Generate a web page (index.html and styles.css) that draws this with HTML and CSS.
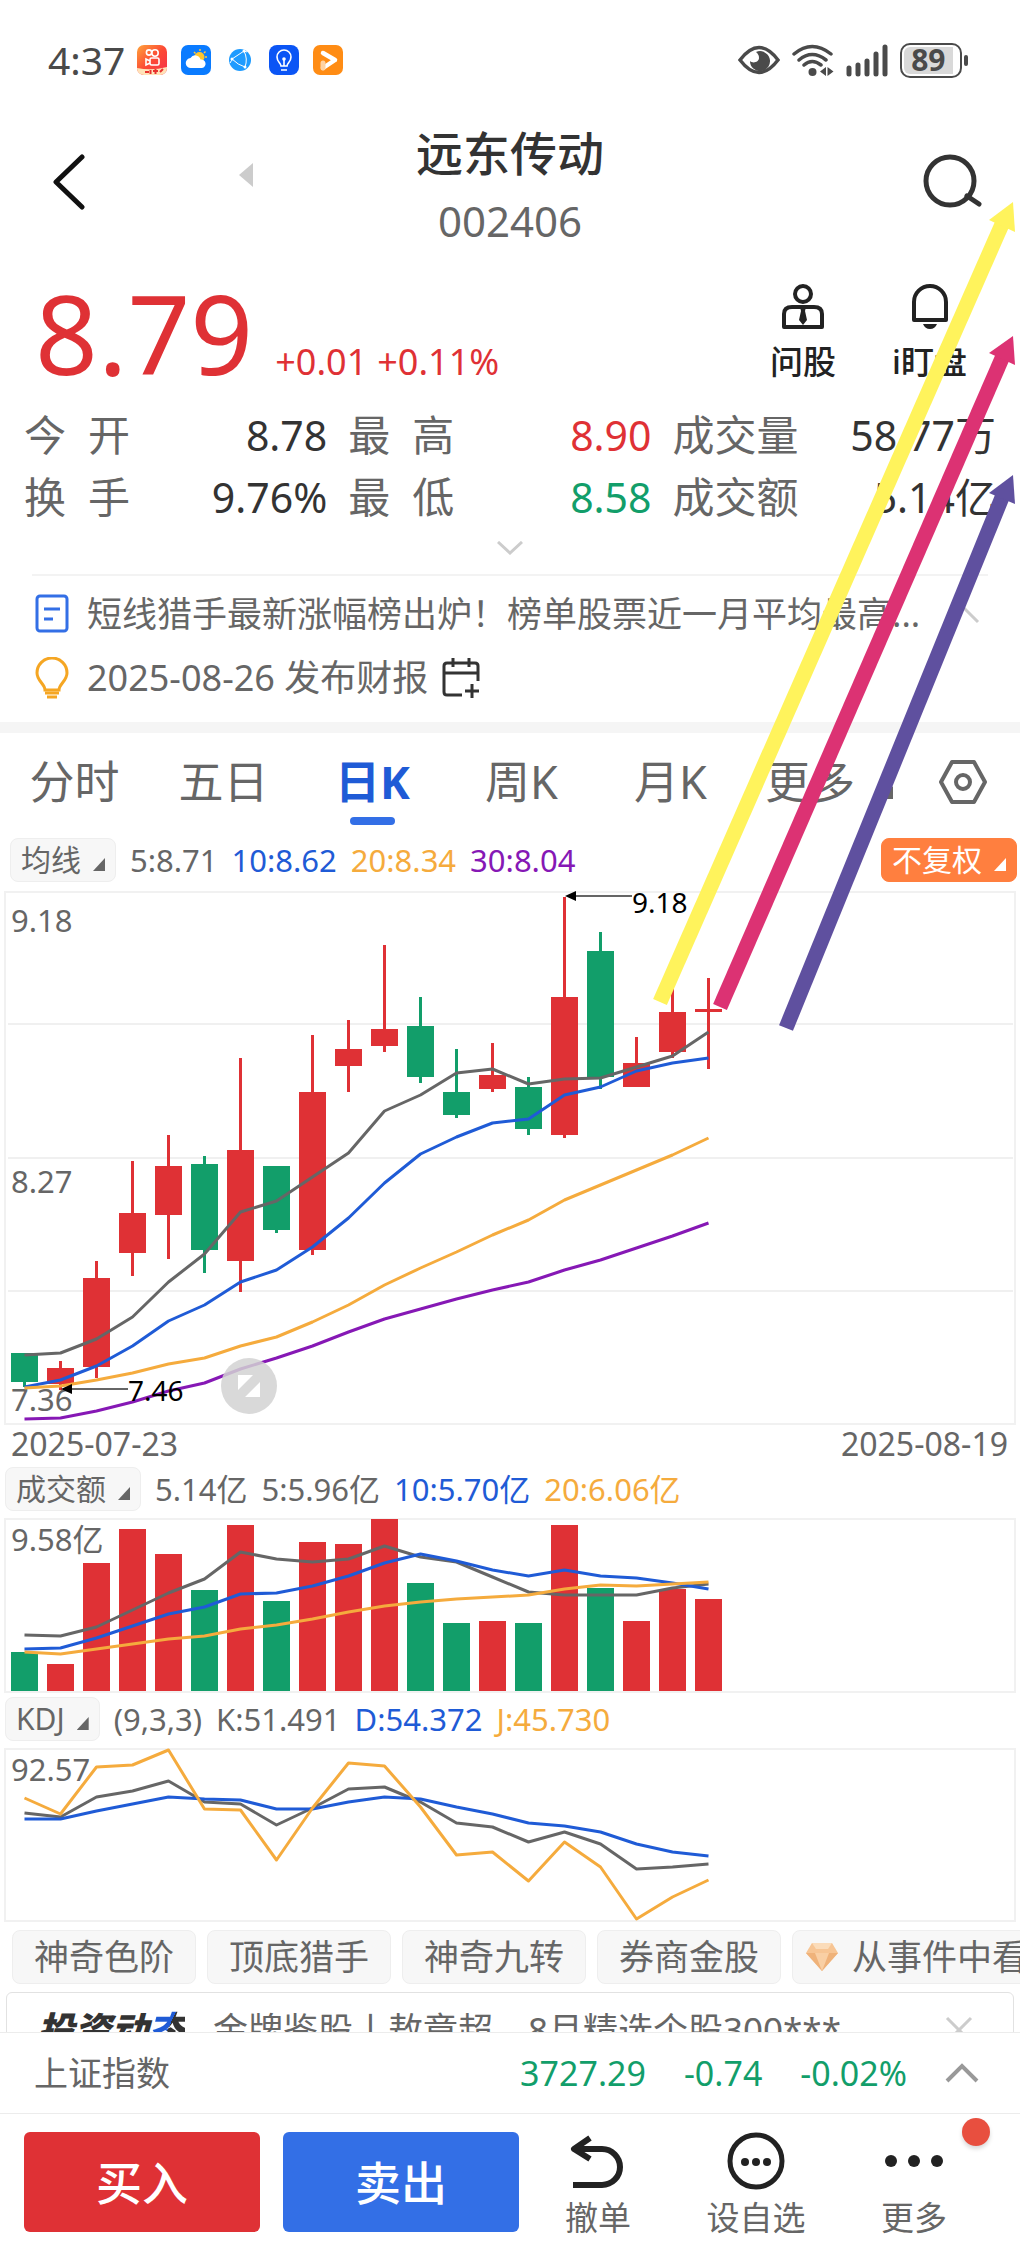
FILE: index.html
```html
<!DOCTYPE html>
<html lang="zh-CN">
<head>
    <meta charset="UTF-8">
    <meta name="viewport" content="width=device-width, initial-scale=1.0">
    <title>远东传动 002406</title>
    <link rel="stylesheet" href="styles.css">
</head>
<body>

<div class="page">
    <main class="content">
        <div class="status-bar">
            <span class="clock">4:37</span>
            <div class="status-apps">
                <svg width="30" height="30" viewBox="0 0 30 30">
                    <defs>
                        <linearGradient id="kuai" x1="0" y1="0" x2="1" y2="1">
                            <stop offset="0" stop-color="#ffa43a"/>
                            <stop offset="0.5" stop-color="#fc4a35"/>
                            <stop offset="1" stop-color="#f5304a"/>
                        </linearGradient>
                    </defs>
                    <rect width="30" height="30" rx="7" fill="url(#kuai)"/>
                    <g fill="none" stroke="#fff" stroke-width="1.6">
                        <circle cx="12" cy="7.500" r="2.600"/>
                        <circle cx="18" cy="8" r="3.200"/>
                        <rect x="13" y="13" width="9" height="7" rx="1.500"/>
                        <path d="M13 16l-4-2v6l4-2"/>
                    </g>
                    <path d="M0 23q15 3 30-1v1a7 7 0 0 1-7 7H7a7 7 0 0 1-7-7z" fill="#ffe3b8"/>
                    <path d="M8 27h4M13.500 25v4M16 26h5M18.500 24v5M23 27l3-3" stroke="#e8322e" stroke-width="2"/>
                </svg>
                <svg width="30" height="30" viewBox="0 0 30 30">
                    <rect width="30" height="30" rx="7" fill="#0a7bff"/>
                    <path d="M19 4v2M24.500 6.500l-1.500 1.500M26 12h-2M13 7l1.500 1.500" stroke="#ffc93a" stroke-width="1.500"/>
                    <circle cx="18.500" cy="12" r="5" fill="#ffc62e"/>
                    <path d="M10 23a5 5 0 0 1-.5-10 5.500 5.500 0 0 1 10 1.500A4.300 4.300 0 0 1 21 23z" fill="#fff"/>
                </svg>
                <svg width="30" height="30" viewBox="0 0 30 30">
                    <circle cx="15" cy="15" r="11" fill="#1e9bff"/>
                    <path d="M7 14L19 6M7 14q6 6 13 8M19 6q4 8 1 16M5 18q2-3 2-4M19 6l3 1" fill="none" stroke="#fff" stroke-width="1"/>
                    <circle cx="7" cy="14" r="1.500" fill="#fff"/>
                    <circle cx="19" cy="6" r="1.500" fill="#fff"/>
                    <circle cx="20" cy="22" r="1.500" fill="#fff"/>
                </svg>
                <svg width="30" height="30" viewBox="0 0 30 30">
                    <rect width="30" height="30" rx="8" fill="#0b55f5"/>
                    <path d="M12 21c0-3-4-4-4-9a7 7 0 0 1 14 0c0 5-4 6-4 9zM12 25h6M15 21v-7" fill="none" stroke="#fff" stroke-width="1.600"/>
                    <circle cx="15" cy="14" r="1.800" fill="#fff"/>
                </svg>
                <svg width="30" height="30" viewBox="0 0 30 30">
                    <rect width="30" height="30" rx="7" fill="#ff8c14"/>
                    <path d="M10 8l12 7-12 8" fill="none" stroke="#fff" stroke-width="4.500" stroke-linecap="round" stroke-linejoin="round"/>
                    <path d="M10 23v-5" stroke="#ffd3a3" stroke-width="5" stroke-linecap="round"/>
                </svg>
            </div>
            <div class="status-right">
                <svg width="42" height="32" viewBox="0 0 42 32">
                    <path d="M2 16Q21-9 40 16Q21 41 2 16z" fill="none" stroke="#4a4a4a" stroke-width="3.500"/>
                    <path d="M18 8a10 10 0 1 1-6 9c3 3 9 1 9-3 0-3-1-4-3-6z" fill="#4a4a4a"/>
                </svg>
                <svg width="42" height="34" viewBox="0 0 42 34">
                    <path d="M2 11q18-15 37 0M7 17q13-11 27 0M12 22q8-7 17 0" fill="none" stroke="#4a4a4a" stroke-width="3.500" stroke-linecap="round"/>
                    <circle cx="20.500" cy="29" r="4" fill="#4a4a4a"/>
                    <path d="M34 24v9l-6-4.500zM35.500 24v9l6-4.500z" fill="#4a4a4a"/>
                </svg>
                <svg width="42" height="34" viewBox="0 0 42 34">
                    <path d="M3 25v6M12 22v9M21 18v13M30 11v20M39 4v27" stroke="#4a4a4a" stroke-width="5" stroke-linecap="round"/>
                </svg>
                <span class="battery"><span class="battery-level">89</span></span>
            </div>
        </div>

        <header class="header">
            <div class="header-left">
                <button class="icon-button" aria-label="返回">
                    <svg width="34" height="56" viewBox="0 0 34 56"><path d="M31 3L5 28l26 25" fill="none" stroke="#111" stroke-width="5" stroke-linecap="round" stroke-linejoin="round"/></svg>
                </button>
                <button class="icon-button prev-stock" aria-label="上一只">
                    <svg width="14" height="24" viewBox="0 0 14 24"><path d="M14 0v24L0 12z" fill="#ccc"/></svg>
                </button>
            </div>
            <div class="stock-title">
                <h1>远东传动</h1>
                <p>002406</p>
            </div>
            <button class="icon-button search" aria-label="搜索">
                <svg width="60" height="56" viewBox="0 0 60 56"><circle cx="28" cy="27" r="24" fill="none" stroke="#333" stroke-width="5"/><path d="M45 42l12 8" stroke="#333" stroke-width="5" stroke-linecap="round"/></svg>
            </button>
        </header>

        <section class="quote">
            <div class="quote-price">
                <strong>8.79</strong>
                <span>+0.01</span>
                <span>+0.11%</span>
            </div>
            <div class="quote-actions">
                <button class="quote-action">
                    <svg width="44" height="46" viewBox="0 0 44 46">
                        <g fill="none" stroke="#222" stroke-width="4">
                            <circle cx="22" cy="10" r="8"/>
                            <path d="M3 43V30q0-7 8-7h22q8 0 8 7v13z" stroke-linejoin="round"/>
                        </g>
                        <path d="M19 23h6l-1 4 2 9-4 5-4-5 2-9z" fill="#222"/>
                    </svg>
                    问股
                </button>
                <button class="quote-action">
                    <svg width="44" height="46" viewBox="0 0 44 46">
                        <path d="M6 36V18a16 16 0 0 1 32 0v18z" fill="none" stroke="#222" stroke-width="4" stroke-linejoin="round"/>
                        <path d="M15 40h14q-2 5-7 5t-7-5z" fill="#222"/>
                    </svg>
                    i盯盘
                </button>
            </div>
        </section>

        <dl class="stats">
            <div><dt>今开</dt><dd>8.78</dd></div>
            <div><dt>最高</dt><dd class="up">8.90</dd></div>
            <div><dt>成交量</dt><dd>58.77万</dd></div>
            <div><dt>换手</dt><dd>9.76%</dd></div>
            <div><dt>最低</dt><dd class="down">8.58</dd></div>
            <div><dt>成交额</dt><dd>5.14亿</dd></div>
        </dl>
        <button class="icon-button expand" aria-label="展开">
            <svg width="26" height="14" viewBox="0 0 26 14"><path d="M1 1l12 11L25 1" fill="none" stroke="#ccc" stroke-width="3"/></svg>
        </button>

        <section class="news">
            <a class="news-row" href="#">
                <svg width="34" height="40" viewBox="0 0 34 40">
                    <rect x="2" y="2" width="30" height="35" rx="3" fill="none" stroke="#336fe6" stroke-width="3"/>
                    <path d="M9 15h16M9 25h9" stroke="#336fe6" stroke-width="3"/>
                </svg>
                <span>短线猎手最新涨幅榜出炉！榜单股票近一月平均最高...</span>
                <svg class="news-caret" width="34" height="20" viewBox="0 0 34 20"><path d="M2 18L17 3l15 15" fill="none" stroke="#ccc" stroke-width="3"/></svg>
            </a>
            <a class="news-row report" href="#">
                <svg width="34" height="42" viewBox="0 0 34 42">
                    <path d="M10 33c0-6-8-9-8-17a15 15 0 0 1 30 0c0 8-8 11-8 17z" fill="none" stroke="#f5a623" stroke-width="3"/>
                    <path d="M10 36h14M12 40h10" stroke="#f5a623" stroke-width="3"/>
                </svg>
                <span>2025-08-26 发布财报</span>
                <svg class="calendar" width="38" height="40" viewBox="0 0 38 40">
                    <path d="M20 37H5q-3 0-3-3V8q0-3 3-3h28q3 0 3 3v15M2 15h34M11 0v9M27 0v9M30 26v14M23 33h14" fill="none" stroke="#333" stroke-width="3"/>
                </svg>
            </a>
        </section>

        <nav class="tabs">
            <a href="#">分时</a>
            <a href="#">五日</a>
            <a href="#" class="active">日K</a>
            <a href="#">周K</a>
            <a href="#">月K</a>
            <a href="#" class="more">更多<i class="corner"></i></a>
            <button class="icon-button" aria-label="设置">
                <svg width="50" height="46" viewBox="0 0 50 46">
                    <path d="M14 3h22l11 20-11 20H14L3 23z" fill="none" stroke="#666" stroke-width="4" stroke-linejoin="round"/>
                    <circle cx="25" cy="23" r="7" fill="none" stroke="#666" stroke-width="4"/>
                </svg>
            </button>
        </nav>

        <div class="legend legend-main">
            <button class="picker">均线<i class="corner"></i></button>
            <span>5:8.71</span>
            <span class="blue">10:8.62</span>
            <span class="amber">20:8.34</span>
            <span class="purple">30:8.04</span>
            <button class="picker picker-orange">不复权<i class="corner"></i></button>
        </div>
        <svg class="chart" id="kline" viewBox="0 0 1020 534"></svg>
        <div class="dates"><span>2025-07-23</span><span>2025-08-19</span></div>

        <div class="legend">
            <button class="picker">成交额<i class="corner"></i></button>
            <span>5.14亿</span>
            <span>5:5.96亿</span>
            <span class="blue">10:5.70亿</span>
            <span class="amber">20:6.06亿</span>
        </div>
        <svg class="chart" id="volume" viewBox="0 0 1020 175"></svg>

        <div class="legend">
            <button class="picker">KDJ<i class="corner"></i></button>
            <span>(9,3,3)</span>
            <span>K:51.491</span>
            <span class="blue">D:54.372</span>
            <span class="amber">J:45.730</span>
        </div>
        <svg class="chart" id="kdj" viewBox="0 0 1020 174"></svg>

        <div class="chips">
            <button class="chip">神奇色阶</button>
            <button class="chip">顶底猎手</button>
            <button class="chip">神奇九转</button>
            <button class="chip">券商金股</button>
            <button class="chip chip-gem">
                <svg width="32" height="28" viewBox="0 0 32 28">
                    <path d="M6 0h20l6 10-16 18L0 10z" fill="#f7c594"/>
                    <path d="M0 10h32L16 28z" fill="#efb27a"/>
                    <path d="M9 10h14l-7 18z" fill="#f9cfa4"/>
                    <path d="M6 0h20l-4 6H10z" fill="#fbdcba"/>
                </svg>
                从事件中看
            </button>
        </div>

        <a class="banner" href="#">
            <strong>投资动<em>态</em></strong>
            <span>金牌鉴股丨敖章超，8月精选个股300***</span>
            <svg width="28" height="28" viewBox="0 0 28 28"><path d="M2 2l24 24M26 2L2 26" stroke="#ccc" stroke-width="3"/></svg>
        </a>
    </main>

    <footer>
        <a class="index-bar" href="#">
            <span class="index-name">上证指数</span>
            <span>3727.29</span>
            <span>-0.74</span>
            <span>-0.02%</span>
            <svg width="34" height="20" viewBox="0 0 34 20"><path d="M2 18L17 3l15 15" fill="none" stroke="#999" stroke-width="4"/></svg>
        </a>
        <div class="trade-bar">
            <button class="trade buy">买入</button>
            <button class="trade sell">卖出</button>
            <div class="trade-tools">
                <button class="tool">
                    <svg width="60" height="58" viewBox="0 0 60 58">
                        <path d="M22 6L6 17l16 10M6 17h28a18 18 0 0 1 0 36H5" fill="none" stroke="#222" stroke-width="6" stroke-linejoin="round"/>
                    </svg>
                    撤单
                </button>
                <button class="tool">
                    <svg width="60" height="58" viewBox="0 0 60 58">
                        <circle cx="30" cy="29" r="26" fill="none" stroke="#222" stroke-width="5"/>
                        <g fill="#222"><circle cx="19" cy="30" r="4"/><circle cx="30" cy="30" r="4"/><circle cx="41" cy="30" r="4"/></g>
                    </svg>
                    设自选
                </button>
                <button class="tool">
                    <svg width="60" height="58" viewBox="0 0 60 58">
                        <g fill="#222"><circle cx="7" cy="29" r="6"/><circle cx="30" cy="29" r="6"/><circle cx="53" cy="29" r="6"/></g>
                    </svg>
                    更多
                    <i class="badge"></i>
                </button>
            </div>
        </div>
    </footer>

    <!-- trend arrows drawn over the page -->
    <svg class="trend-arrows" viewBox="0 0 1020 1040">
        <g stroke="#fff35c" fill="#fff35c">
            <path d="M660 1002L1003 222" stroke-width="15"/>
            <path d="M1013 202L989 220L1015 232z" stroke="none"/>
        </g>
        <g stroke="#dc3273" fill="#dc3273">
            <path d="M720 1007L1003 356" stroke-width="15"/>
            <path d="M1013 336L989 353L1015 365z" stroke="none"/>
        </g>
        <g stroke="#5f509f" fill="#5f509f">
            <path d="M786 1028L1003 495" stroke-width="15"/>
            <path d="M1013 475L989 493L1015 504z" stroke="none"/>
        </g>
    </svg>
</div>

<script>
    const red = '#df3135';
    const green = '#129e6a';
    const gray = '#666';
    const blue = '#1f5bd6';
    const amber = '#f5ab3d';
    const purple = '#8618b5';
    const step = 36;
    const barWidth = 27;

    // [up, high, top, bottom, low]
    const candles = [
        [0, 462, 462, 491, 496], [1, 470, 477, 493, 499], [1, 370, 387, 476, 487], [1, 270, 322, 362, 385],
        [1, 244, 275, 324, 368], [0, 265, 273, 359, 382], [1, 167, 259, 370, 401], [0, 275, 275, 339, 342],
        [1, 144, 201, 359, 364], [1, 129, 158, 175, 201], [1, 54, 138, 155, 161], [0, 106, 135, 186, 192],
        [0, 158, 201, 224, 227], [1, 152, 184, 198, 201], [0, 186, 196, 238, 244], [1, 6, 106, 244, 247],
        [0, 41, 60, 186, 198], [1, 146, 172, 196, 196], [1, 92, 121, 161, 167], [1, 87, 118, 121, 178]
    ];
    const volumes = [134, 146, 45, 11, 36, 72, 7, 83, 24, 26, 1, 65, 105, 103, 105, 7, 70, 103, 71, 81];

    function centerX(i) {
        return 24.5 + i * step;
    }

    function line(values, color) {
        const points = values.map((y, i) => centerX(i) + ',' + y).join(' ');
        return `<polyline points="${points}" fill="none" stroke="${color}" stroke-width="3" stroke-linejoin="round"/>`;
    }

    function bar(i, top, bottom, up) {
        return `<rect x="${centerX(i) - barWidth / 2}" y="${top}" width="${barWidth}" height="${bottom - top}" fill="${up ? red : green}"/>`;
    }

    function frame(height) {
        return `<rect x="5" y="1" width="1010" height="${height - 2}" fill="none" stroke="#f1f1f1" stroke-width="2"/>`;
    }

    function drawKline() {
        let html = frame(534);
        [133, 267, 400].forEach(y => {
            html += `<path d="M8 ${y}H1013" stroke="#f0f0f0" stroke-width="2"/>`;
        });
        html += '<text x="11" y="41">9.18</text><text x="11" y="302">8.27</text><text x="11" y="520">7.36</text>';
        candles.forEach(([up, high, top, bottom, low], i) => {
            html += `<path d="M${centerX(i)} ${high}V${low}" stroke="${up ? red : green}" stroke-width="3"/>`;
            html += bar(i, top, bottom, up);
        });
        html += line([464, 462, 448, 426, 391, 363, 321, 310, 286, 262, 220, 204, 182, 178, 193, 188, 187, 176, 165, 141], gray);
        html += line([496, 489, 475, 455, 430, 414, 391, 379, 356, 327, 292, 263, 246, 232, 228, 204, 196, 180, 172, 167], blue);
        html += line([497, 495, 489, 482, 473, 467, 455, 446, 431, 414, 394, 377, 361, 344, 329, 309, 294, 279, 264, 247], amber);
        html += line([528, 527, 520, 511, 500, 492, 478, 467, 455, 441, 428, 418, 408, 399, 391, 379, 369, 357, 345, 332], purple);
        // high and low markers
        html += '<path d="M574 5H632M70 498H128" stroke="#666" stroke-width="2"/>';
        html += '<path d="M565 5l11-5v10zM61 498l11-5v10z" fill="#000"/>';
        html += '<text class="mark" x="632" y="22">9.18</text><text class="mark" x="128" y="510">7.46</text>';
        // full screen button
        html += '<circle cx="249" cy="495" r="28" fill="#d2d2d2" fill-opacity="0.85"/>';
        html += '<path d="M238 484h15l-15 15zM260 506h-15l15-15z" fill="#fff"/>';
        document.getElementById('kline').innerHTML = html;
    }

    function drawVolume() {
        let html = frame(175);
        volumes.forEach((top, i) => {
            html += bar(i, top, 173, candles[i][0]);
        });
        html += '<text x="11" y="33">9.58亿</text>';
        html += line([117, 118, 109, 92, 75, 61, 34, 41, 44, 41, 28, 39, 44, 59, 74, 77, 77, 77, 70, 66], gray);
        html += line([131, 130, 120, 108, 96, 89, 76, 75, 68, 58, 45, 36, 43, 52, 58, 52, 58, 60, 65, 71], blue);
        html += line([134, 136, 131, 126, 121, 118, 111, 107, 101, 94, 88, 84, 81, 79, 77, 71, 67, 68, 66, 64], amber);
        document.getElementById('volume').innerHTML = html;
    }

    function drawKdj() {
        let html = frame(174);
        html += '<text x="11" y="33">92.57</text>';
        html += line([65, 69, 49, 43, 33, 54, 56, 77, 60, 41, 39, 54, 75, 79, 94, 84, 96, 121, 119, 116], gray);
        html += line([71, 71, 63, 56, 49, 51, 52, 61, 61, 54, 49, 51, 59, 66, 75, 78, 84, 96, 104, 108], blue);
        html += line([50, 66, 19, 17, 2, 61, 62, 112, 60, 15, 18, 59, 107, 104, 133, 94, 119, 171, 149, 132], amber);
        document.getElementById('kdj').innerHTML = html;
    }

    drawKline();
    drawVolume();
    drawKdj();
</script>

</body>
</html>
```

FILE: styles.css
```css
* {
    box-sizing: border-box;
}
body {
    font-family: 'Noto Sans', 'Noto Sans CJK SC', sans-serif;
    margin: 0;
    background: #fff;
    color: #666;
}
h1, p, dl, dd {
    margin: 0;
}
a {
    color: inherit;
    text-decoration: none;
}
button {
    font-family: inherit;
    color: inherit;
    border: none;
    background: none;
    padding: 0;
    white-space: nowrap;
    cursor: pointer;
}
svg {
    display: block;
    flex-shrink: 0;
}
.page {
    position: relative;
    display: flex;
    flex-direction: column;
    height: 100vh;
}
.content {
    flex: 1;
    min-height: 0;
    overflow: hidden;
}
.icon-button {
    display: flex;
    align-items: center;
    justify-content: center;
}

/* status bar */
.status-bar {
    display: flex;
    align-items: center;
    padding: 36px 52px 0 48px;
    height: 84px;
    color: #4a4a4a;
}
.clock {
    font-size: 39px;
    line-height: 48px;
}
.status-apps {
    display: flex;
    gap: 14px;
    margin-left: 12px;
}
.status-right {
    display: flex;
    align-items: center;
    gap: 12px;
    margin-left: auto;
}
.battery {
    position: relative;
    width: 62px;
    height: 35px;
    border: 2px solid #4a4a4a;
    border-radius: 10px;
    padding: 2px;
    margin-right: 6px;
}
.battery::after {
    content: '';
    position: absolute;
    right: -8px;
    top: 10px;
    width: 4px;
    height: 11px;
    border-radius: 2px;
    background: #4a4a4a;
}
.battery-level {
    display: block;
    width: 90%;
    height: 100%;
    border-radius: 6px 0 0 6px;
    background: #d9d9d9;
    font-size: 30px;
    font-weight: 700;
    line-height: 26px;
    text-align: center;
}

/* header */
.header {
    display: grid;
    grid-template-columns: 1fr auto 1fr;
    align-items: center;
    padding: 43px 38px 0;
}
.header-left {
    display: flex;
    align-items: center;
    padding-left: 13px;
}
.prev-stock {
    margin: 0 0 14px 154px;
}
.stock-title {
    display: flex;
    flex-direction: column;
    gap: 27px;
    text-align: center;
}
.stock-title h1 {
    font-size: 47px;
    line-height: 52px;
    font-weight: 500;
    color: #333;
}
.stock-title p {
    font-size: 42px;
    line-height: 30px;
}
.search {
    justify-self: end;
}

/* price */
.quote {
    display: flex;
    justify-content: space-between;
    align-items: center;
    padding: 40px 53px 0 35px;
}
.quote-price {
    display: flex;
    align-items: baseline;
    gap: 10px;
    font-size: 36px;
    color: #df3135;
}
.quote-price strong {
    font-size: 110px;
    line-height: 112px;
    font-weight: 400;
    margin-right: 12px;
}
.quote-actions {
    display: flex;
    gap: 56px;
}
.quote-action {
    display: flex;
    flex-direction: column;
    align-items: center;
    gap: 14px;
    font-size: 33px;
    font-weight: 500;
    line-height: 36px;
    color: #222;
}
.stats {
    display: grid;
    grid-template-columns: 15fr 15fr 16fr;
    gap: 18px 21px;
    padding: 25px 24px 0;
    font-size: 42px;
    line-height: 44px;
}
.stats div {
    display: flex;
    justify-content: space-between;
    align-items: baseline;
}
.stats dt {
    min-width: 106px;
    text-align-last: justify;
}
.stats dd {
    font-size: 41px;
    color: #333;
}
.stats .up {
    color: #df3135;
}
.stats .down {
    color: #129e6a;
}
.expand {
    width: 100%;
    padding: 22px 0 19px;
}

/* news */
.news {
    display: flex;
    flex-direction: column;
    gap: 20px;
    margin: 0 32px;
    padding: 16px 8px 22px 3px;
    border-top: 2px solid #f3f3f3;
    font-size: 35px;
    line-height: 44px;
    white-space: nowrap;
}
.news-row {
    display: flex;
    align-items: center;
}
.news-row span {
    margin-left: 18px;
}
.news-caret {
    margin-left: auto;
}
.report {
    font-size: 36px;
}
.calendar {
    margin-left: 14px;
}

/* period tabs */
.tabs {
    display: grid;
    grid-template-columns: repeat(5, 1fr) 172px 103px;
    padding-top: 22px;
    border-top: 11px solid #f5f5f5;
    font-size: 45px;
    line-height: 54px;
}
.tabs a {
    display: flex;
    flex-direction: column;
    align-items: center;
}
.tabs .active {
    color: #1f5bd6;
    font-weight: 700;
}
.tabs .active::after {
    content: '';
    width: 45px;
    height: 8px;
    margin-top: 8px;
    border-radius: 4px;
    background: #336fe6;
}
.tabs .more {
    flex-direction: row;
    align-items: baseline;
    gap: 26px;
    padding-left: 20px;
}
.tabs .icon-button {
    height: 54px;
    padding-right: 12px;
}
.corner {
    display: inline-block;
    width: 12px;
    height: 13px;
    background: currentColor;
    clip-path: polygon(100% 0, 100% 100%, 0 100%);
}

/* indicator rows */
.legend {
    display: flex;
    align-items: center;
    gap: 14px;
    margin: 4px 5px 7px;
    font-size: 31px;
    line-height: 42px;
    white-space: nowrap;
}
.legend-main {
    margin: 13px 3px 9px 10px;
}
.picker {
    display: flex;
    align-items: baseline;
    gap: 12px;
    padding: 0 10px;
    border: 1px solid #eee;
    border-radius: 8px;
    background: #f7f7f7;
    font-size: 30px;
    line-height: 42px;
}
.picker-orange {
    margin-left: auto;
    border-color: #ff7f3f;
    background: #ff7f3f;
    color: #fff;
}
.blue {
    color: #1f5bd6;
}
.amber {
    color: #f5ab3d;
}
.purple {
    color: #8618b5;
}
.chart {
    width: 100%;
    height: auto;
}
.chart text {
    font-size: 31px;
    fill: #666;
}
.chart .mark {
    font-size: 28px;
    fill: #000;
}
.dates {
    display: flex;
    justify-content: space-between;
    padding: 0 12px 0 11px;
    font-size: 32px;
    line-height: 38px;
}

/* chips and banner */
.chips {
    display: flex;
    gap: 11px;
    margin: 8px 0 8px 12px;
    overflow: hidden;
}
.chip {
    flex-shrink: 0;
    padding: 0 21px;
    border: 1px solid #eee;
    border-radius: 8px;
    background: #f7f7f7;
    font-size: 35px;
    line-height: 52px;
}
.chip-gem {
    display: flex;
    align-items: center;
    gap: 14px;
    padding: 0 13px;
}
.banner {
    display: flex;
    align-items: center;
    margin: 0 6px;
    padding: 12px 40px 12px 30px;
    border: 1px solid #e2e2e2;
    border-radius: 6px;
    font-size: 35px;
    line-height: 50px;
}
.banner strong {
    font-size: 37px;
    font-weight: 900;
    font-style: italic;
    color: #333;
    margin-right: 28px;
}
.banner em {
    background: linear-gradient(115deg, #1f5bd6 52%, #333 52%);
    background-clip: text;
    -webkit-background-clip: text;
    color: transparent;
}
.banner svg {
    margin-left: auto;
}

/* bottom bars */
.index-bar {
    display: flex;
    align-items: center;
    gap: 38px;
    padding: 0 41px 0 34px;
    border-top: 1px solid #ececec;
    border-bottom: 1px solid #ececec;
    font-size: 34px;
    line-height: 80px;
    color: #129e6a;
}
.index-name {
    margin-right: auto;
    color: #666;
}
.trade-bar {
    display: flex;
    align-items: flex-start;
    padding: 18px 27px 14px 24px;
}
.trade {
    flex: 236 1 0;
    margin-right: 23px;
    border-radius: 6px;
    font-size: 46px;
    font-weight: 500;
    line-height: 100px;
    color: #fff;
}
.buy {
    background: #df3135;
}
.sell {
    margin-right: 0;
    background: #336fe6;
}
.trade-tools {
    flex: 474 1 0;
    display: grid;
    grid-template-columns: repeat(3, 1fr);
}
.tool {
    position: relative;
    display: flex;
    flex-direction: column;
    align-items: center;
    gap: 10px;
    font-size: 33px;
    line-height: 36px;
}
.badge {
    position: absolute;
    top: -14px;
    right: 3px;
    width: 28px;
    height: 28px;
    border-radius: 50%;
    background: #e84f3f;
    box-shadow: 0 3px 4px rgba(0, 0, 0, 0.15);
}

.trend-arrows {
    position: absolute;
    top: 0;
    left: 0;
    width: 100%;
    pointer-events: none;
}
```
